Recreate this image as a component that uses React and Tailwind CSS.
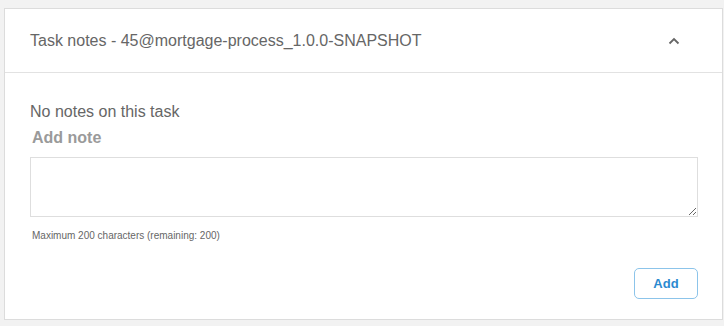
import React from "react";

const ChevronUp = () => (
  <svg width="12" height="8" viewBox="0 0 12 8" fill="none">
    <path d="M1.5 6.5L6 2L10.5 6.5" stroke="#666" strokeWidth="1.8" />
  </svg>
);

const App = () => {
  return (
    <div className="w-[724px] h-[326px] bg-[#f2f2f2] pt-2 pl-1 font-['Liberation_Sans',Arial,sans-serif]">
      <div className="w-[719px] h-[312px] bg-white border border-[#dcdcdc] flex flex-col">
        {/* Header */}
        <div className="h-[64px] border-b border-[#e2e2e2] flex items-center justify-between pl-[25px] pr-[42px]">
          <span className="text-[16px] text-[#666]">Task notes - 45@mortgage-process_1.0.0-SNAPSHOT</span>
          <ChevronUp />
        </div>

        {/* Body */}
        <div className="flex flex-col pl-[25px] pr-[24px] pt-[28px]">
          <p className="text-[16px] leading-[22px] text-[#666]">No notes on this task</p>
          <label className="mt-[5px] ml-[2px] text-[16px] leading-[20px] font-bold text-[#9a9a9a]">Add note</label>
          <textarea className="mt-[9px] h-[60px] w-full border border-[#dedede] outline-none resize-y" />
          <p className="mt-[12px] ml-[2px] text-[10px] leading-[14px] text-[#666]">
            Maximum 200 characters (remaining: 200)
          </p>
          <div className="flex justify-end mt-[25px]">
            <button className="w-[64px] h-[31px] rounded-[5px] border border-[#8cc4ea] text-[#2b8ad0] text-[13px] font-bold bg-white">
              Add
            </button>
          </div>
        </div>
      </div>
    </div>
  );
};

export default App;
